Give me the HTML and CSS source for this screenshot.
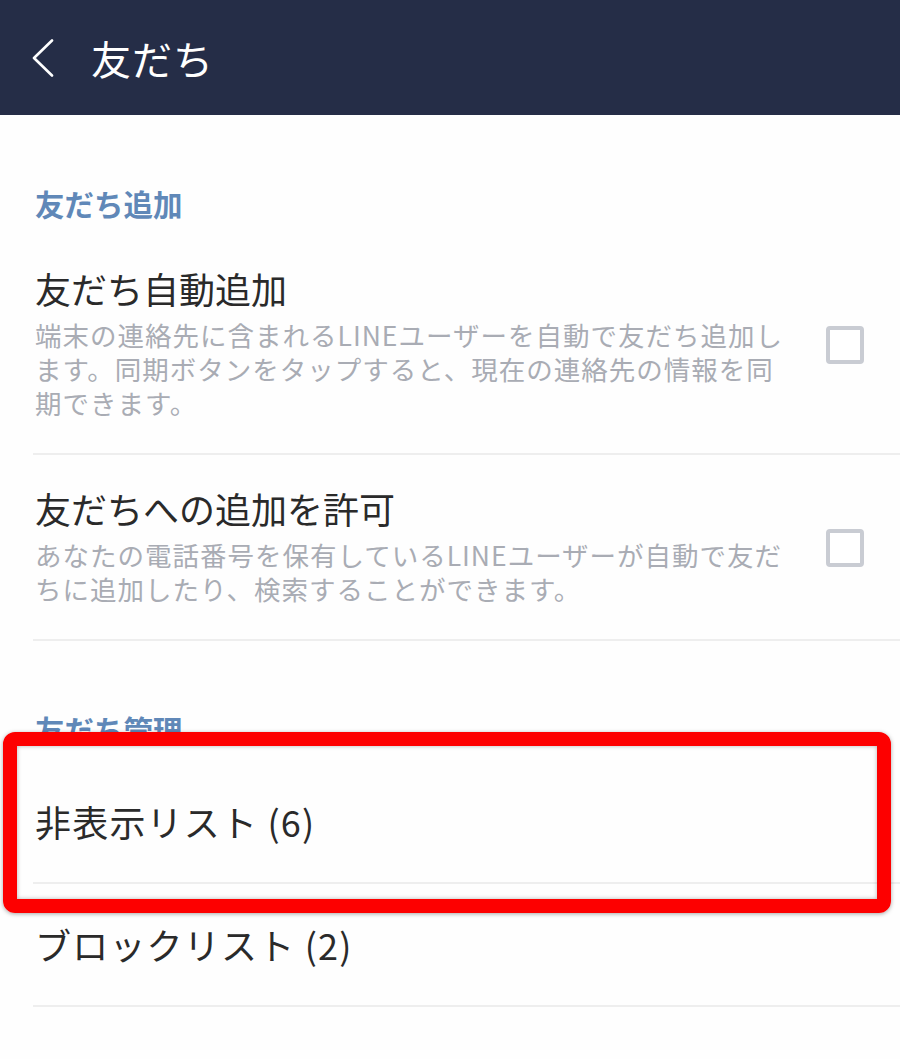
FILE: index.html
```html
<!DOCTYPE html>
<html lang="ja">
<head>
<meta charset="utf-8">
<title>友だち</title>
<link rel="stylesheet" href="styles.css">
</head>
<body>
<header class="appbar">
  <svg class="back" width="22" height="38" viewBox="0 0 22 38" aria-hidden="true">
    <polyline points="20,1.5 2,19 20,36.5" fill="none" stroke="#ffffff" stroke-width="2.6" stroke-linecap="round" stroke-linejoin="round"/>
  </svg>
  <h1 class="appbar-title">友だち</h1>
</header>

<main class="content">
  <h2 class="section-title">友だち追加</h2>

  <div class="item">
    <div class="item-text">
      <div class="item-title">友だち自動追加</div>
      <p class="item-desc">端末の連絡先に含まれるLINEユーザーを自動で友だち追加し<br>ます。同期ボタンをタップすると、現在の連絡先の情報を同<br>期できます。</p>
    </div>
    <span class="checkbox"></span>
  </div>

  <div class="item">
    <div class="item-text">
      <div class="item-title">友だちへの追加を許可</div>
      <p class="item-desc">あなたの電話番号を保有しているLINEユーザーが自動で友だ<br>ちに追加したり、検索することができます。</p>
    </div>
    <span class="checkbox"></span>
  </div>

  <h2 class="section-title">友だち管理</h2>

  <div class="row highlight-anchor">
    <div class="item-title row-title">非表示リスト (6)</div>
    <span class="highlight"></span>
  </div>
  <div class="row">
    <div class="item-title row-title">ブロックリスト (2)</div>
  </div>
</main>
</body>
</html>
```

FILE: styles.css
```css
* {
  box-sizing: border-box;
}

html, body {
  margin: 0;
  padding: 0;
}

body {
  background: #fefefe;
  font-family: "Noto Sans CJK JP", "Noto Sans", sans-serif;
  width: 900px;
  height: 1059px;
  overflow: hidden;
}

.appbar {
  height: 115px;
  background: #252d47;
  display: flex;
  align-items: center;
  padding-left: 32px;
}

.back {
  display: block;
}

.appbar-title {
  margin: 0 0 0 37px;
  font-size: 40px;
  line-height: 40px;
  font-weight: 400;
  color: #ffffff;
  letter-spacing: 1px;
}

.content {
  display: flex;
  flex-direction: column;
}

.section-title {
  margin: 73px 0 17px 35px;
  font-size: 29.5px;
  line-height: 30px;
  font-weight: 700;
  color: #6088b8;
}

.item {
  display: flex;
  align-items: center;
  margin-left: 33px;
  padding: 35px 0 33px 2px;
  border-bottom: 2px solid #eeeeee;
}

.item-text {
  flex: 1;
}

.item-title {
  font-size: 36px;
  line-height: 36px;
  color: #2a2a2a;
  white-space: nowrap;
}

.row-title {
  letter-spacing: 1.2px;
}

.item-desc {
  margin: 12px 0 0;
  font-size: 26.5px;
  line-height: 34px;
  letter-spacing: 1px;
  color: #a9acb4;
  white-space: nowrap;
}

.checkbox {
  flex: none;
  width: 38px;
  height: 38px;
  margin-right: 36px;
  border: 4px solid #c9ccd3;
  border-radius: 4px;
  background: #ffffff;
}

.row {
  margin-left: 33px;
  padding: 42px 0 43px 2px;
  border-bottom: 2px solid #eeeeee;
}

.highlight-anchor {
  position: relative;
}

.highlight {
  position: absolute;
  left: -30px;
  top: -29px;
  width: 888px;
  height: 181px;
  border: 14px solid #fd0000;
  border-radius: 12px;
  box-shadow: 0 1px 4px rgba(0, 0, 0, 0.35), inset 0 0 4px rgba(0, 0, 0, 0.3);
  pointer-events: none;
}
```
